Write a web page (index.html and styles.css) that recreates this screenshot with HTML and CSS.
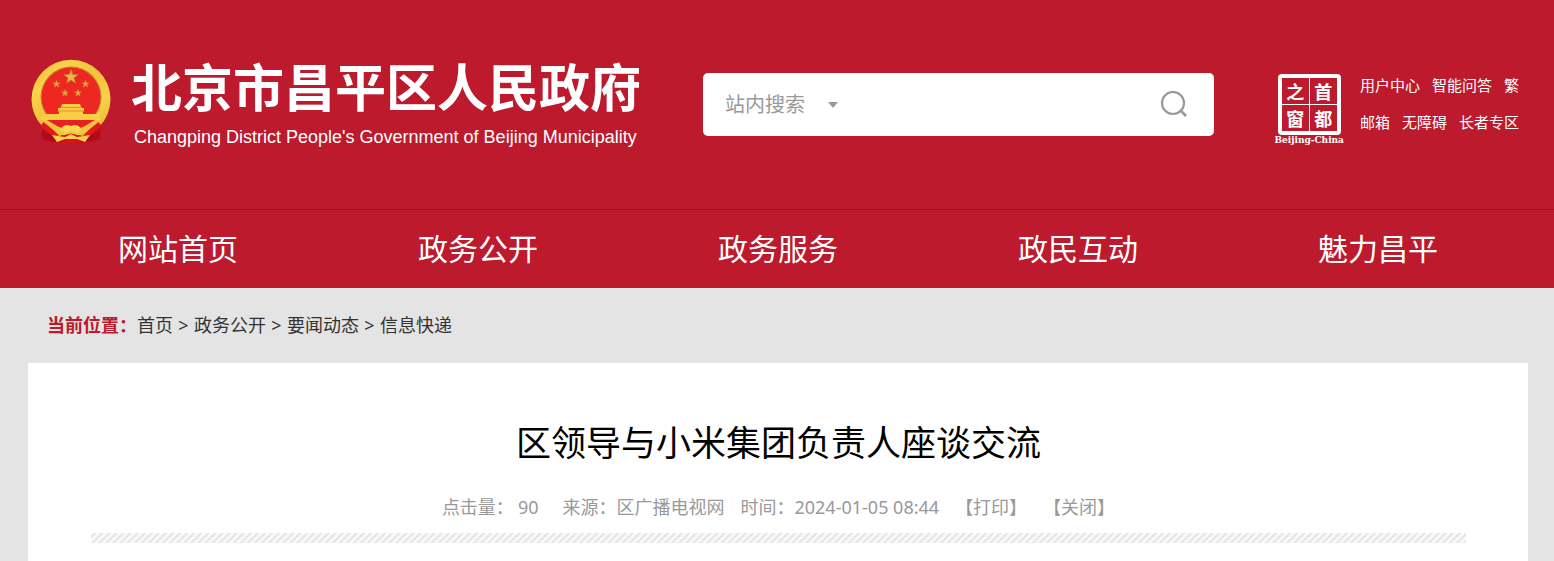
FILE: index.html
```html
<!DOCTYPE html>
<html lang="zh-CN">
<head>
<meta charset="utf-8">
<meta name="viewport" content="width=device-width, initial-scale=1">
<title>区领导与小米集团负责人座谈交流</title>
<link rel="stylesheet" href="styles.css">
</head>
<body>
<header class="site-header">
  <div class="masthead">
    <a class="brand" href="#">
      <svg class="emblem" viewBox="0 0 80 86" aria-hidden="true">
        <defs>
          <linearGradient id="gold" x1="0" y1="0" x2="1" y2="1">
            <stop offset="0" stop-color="#efba30"/>
            <stop offset=".25" stop-color="#f8d34c"/>
            <stop offset=".5" stop-color="#f2c238"/>
            <stop offset=".75" stop-color="#f7d04a"/>
            <stop offset="1" stop-color="#e9ad29"/>
          </linearGradient>
          <path id="star" d="M0-6 1.4-1.9 5.7-1.9 2.3.7 3.5 4.9 0 2.4-3.5 4.9-2.3.7-5.7-1.9-1.4-1.9Z"/>
        </defs>
        <path d="M12 58C13 64 10 72 11 80L18 84 24 82 32 85 40 83 48 85 56 82 62 84 70 79C69 72 71 65 68 58Z" fill="#c9101b"/>
        <path d="M11 70Q18 77 29 77L24 83 11 80ZM69 70Q62 77 51 77L56 83 69 80Z" fill="#ad0d18"/>
        <path d="M12 68A39.500 39.500 0 1 1 68 68L56 72H24Z" fill="url(#gold)"/>
        <circle cx="40" cy="38" r="30.500" fill="#c98a2a"/>
        <circle cx="40" cy="38" r="29.500" fill="#ee2722"/>
        <use href="#star" transform="translate(40 18) scale(1.300)" fill="#e9b545" stroke="#b77a2a" stroke-width=".4"/>
        <g fill="#e6a53c" stroke="#b9682a" stroke-width=".3">
          <use href="#star" transform="translate(25.500 25) scale(.7)"/>
          <use href="#star" transform="translate(54.500 25) scale(.7)"/>
          <use href="#star" transform="translate(34 34) scale(.7)"/>
          <use href="#star" transform="translate(47 34) scale(.7)"/>
        </g>
        <path d="M31 45H49L50 48H30ZM27 49H53V52H27ZM28 52H52V55H68L70 61H10L12 55H28Z" fill="#f8ce46"/>
        <path d="M29 48.500H51M27 52H53" stroke="#ef8c29" fill="none"/>
        <path d="M9 61H15L25 66 34 73 40 69 46 73 55 66 65 61H71L66 70 52 77 40 74 28 77 14 70Z" fill="#f3c13d"/>
        <path d="M16 61H64L54 67 47 70 44 67 40 68 36 67 33 70 26 67Z" fill="#e8211f"/>
        <path d="M11 65Q19 71 26 78M69 65Q61 71 54 78" fill="none" stroke="#e0191c" stroke-width="5"/>
        <path d="M29 71Q33 64 40 67Q47 64 51 71L44 75 40 73 36 75Z" fill="#fbd84f"/>
        <path d="M25 71 33 75 40 73 47 75 55 71" fill="none" stroke="#f4c840" stroke-width="2.500"/>
        <path d="M21 76 34 78 40 75 46 78 59 76 54 83 46 80H34L26 83Z" fill="#f9cf48"/>
        <path d="M30 84Q40 76 50 84L44 85H36Z" fill="#d4151c"/>
      </svg>
      <span class="brand-text">
        <span class="brand-cn">北京市昌平区人民政府</span>
        <span class="brand-en">Changping District People's Government of Beijing Municipality</span>
      </span>
    </a>
    <form class="search">
      <select class="search-scope" aria-label="搜索范围">
        <option>站内搜索</option>
      </select>
      <svg class="caret" viewBox="0 0 10 6" aria-hidden="true"><path d="M0 0H10L5 6Z" fill="#999"/></svg>
      <input class="search-input" type="text" aria-label="搜索内容">
      <button class="search-button" type="button" aria-label="搜索">
        <svg viewBox="0 0 28 28" aria-hidden="true"><circle cx="13" cy="12" r="11" fill="none" stroke="#999" stroke-width="2.200"/><path d="M20 19 26 25" stroke="#999" stroke-width="2.800"/></svg>
      </button>
    </form>
    <a class="capital" href="#" aria-label="首都之窗">
      <span class="seal"><span>之</span><span>首</span><span>窗</span><span>都</span></span>
      <span class="seal-caption">Beijing-China</span>
    </a>
    <div class="tools">
      <div class="tools-row"><a href="#">用户中心</a><a href="#">智能问答</a><a href="#">繁</a></div>
      <div class="tools-row"><a href="#">邮箱</a><a href="#">无障碍</a><a href="#">长者专区</a></div>
    </div>
  </div>
  <nav class="main-nav">
    <a href="#">网站首页</a>
    <a href="#">政务公开</a>
    <a href="#">政务服务</a>
    <a href="#">政民互动</a>
    <a href="#">魅力昌平</a>
  </nav>
</header>
<main class="page">
  <nav class="crumbs" aria-label="当前位置">
    <strong>当前位置：</strong>
    <a href="#">首页</a><span>&gt;</span><a href="#">政务公开</a><span>&gt;</span><a href="#">要闻动态</a><span>&gt;</span><a href="#">信息快递</a>
  </nav>
  <article class="article">
    <h1>区领导与小米集团负责人座谈交流</h1>
    <div class="meta">
      <span class="hits">点击量：<span>90</span></span>
      <span class="source">来源：区广播电视网</span>
      <span class="time">时间：2024-01-05 08:44</span>
      <button type="button">【打印】</button>
      <button type="button">【关闭】</button>
    </div>
    <div class="stripe"></div>
  </article>
</main>
</body>
</html>
```
FILE: styles.css
```css
* {
  box-sizing: border-box;
}

body {
  margin: 0;
  background: #e4e4e4;
  color: #333;
  font-family: "Noto Sans", "Noto Sans CJK SC", sans-serif;
}

a {
  color: inherit;
  text-decoration: none;
}

button,
input,
select {
  margin: 0;
  padding: 0;
  border: 0;
  background: transparent;
  color: inherit;
  font: inherit;
}

button {
  cursor: pointer;
}

.site-header {
  background: #bd1a2d;
  color: #fff;
}

.masthead {
  display: flex;
  align-items: center;
  min-height: 210px;
  padding: 0 35px 0 31px;
  border-bottom: 1px solid #991020;
}

.brand {
  display: flex;
  align-items: center;
  gap: 20px;
}

.emblem {
  width: 80px;
  height: 86px;
  margin-bottom: 6px;
}

.brand-text {
  display: flex;
  flex-direction: column;
  gap: 12px;
  margin-bottom: 4px;
  white-space: nowrap;
}

.brand-cn {
  font: 700 51px/56px "Noto Sans CJK SC", sans-serif;
}

.brand-en {
  padding-left: 3px;
  font: 18px/24px "Liberation Sans", sans-serif;
}

.search {
  display: flex;
  flex: 1;
  align-items: center;
  height: 63px;
  margin: 0 60px 0 62px;
  padding: 0 26px 0 22px;
  border-radius: 5px;
  background: #fff;
  color: #999;
  font-size: 20px;
}

.search-scope {
  width: 103px;
  height: 40px;
  appearance: none;
}

.caret {
  width: 10px;
  height: 6px;
}

.search-input {
  flex: 1;
  min-width: 0;
  height: 40px;
  margin: 0 12px;
}

.search-button {
  width: 28px;
  height: 28px;
}

.search-button svg {
  display: block;
}

.capital {
  display: flex;
  flex-direction: column;
  align-items: center;
  margin: 10px 16px 0 0;
}

.seal {
  display: grid;
  grid-template-columns: 1fr 1fr;
  gap: 1px;
  width: 63px;
  height: 61px;
  border: 4px solid #fff;
  border-radius: 4px;
  background: #fff;
  font: 700 18px/26px "Noto Sans CJK SC", sans-serif;
  text-align: center;
}

.seal span {
  background: #bd1a2d;
}

.seal-caption {
  font: 700 9px/11px "DejaVu Serif", serif;
}

.tools {
  margin-bottom: 2px;
  font-size: 15px;
  line-height: 37px;
  white-space: nowrap;
}

.tools-row {
  display: flex;
  gap: 12px;
}

.main-nav {
  display: grid;
  grid-template-columns: repeat(5, 1fr);
  padding: 0 26px 0 28px;
  font-size: 30px;
  line-height: 78px;
  text-align: center;
}

.page {
  padding: 0 26px 0 28px;
}

.crumbs {
  display: flex;
  padding: 0 19px;
  font-size: 18px;
  line-height: 75px;
}

.crumbs strong {
  color: #bd1a2d;
}

.crumbs span {
  width: 21px;
  text-align: center;
}

.article {
  min-height: 198px;
  padding: 52px 62px 18px 63px;
  background: #fff;
}

.article h1 {
  margin: 0;
  color: #000;
  font-size: 35px;
  font-weight: 400;
  line-height: 56px;
  text-align: center;
}

.meta {
  display: flex;
  justify-content: center;
  gap: 16px;
  padding: 22px 0 12px;
  color: #999;
  font-size: 18px;
  line-height: 28px;
}

.hits {
  margin-right: 8px;
}

.hits span {
  padding-left: 4px;
}

.stripe {
  height: 10px;
  background: repeating-linear-gradient(135deg, #fbfbfb 0 1px, #e2e2e2 3px, #fbfbfb 5px);
}
```
